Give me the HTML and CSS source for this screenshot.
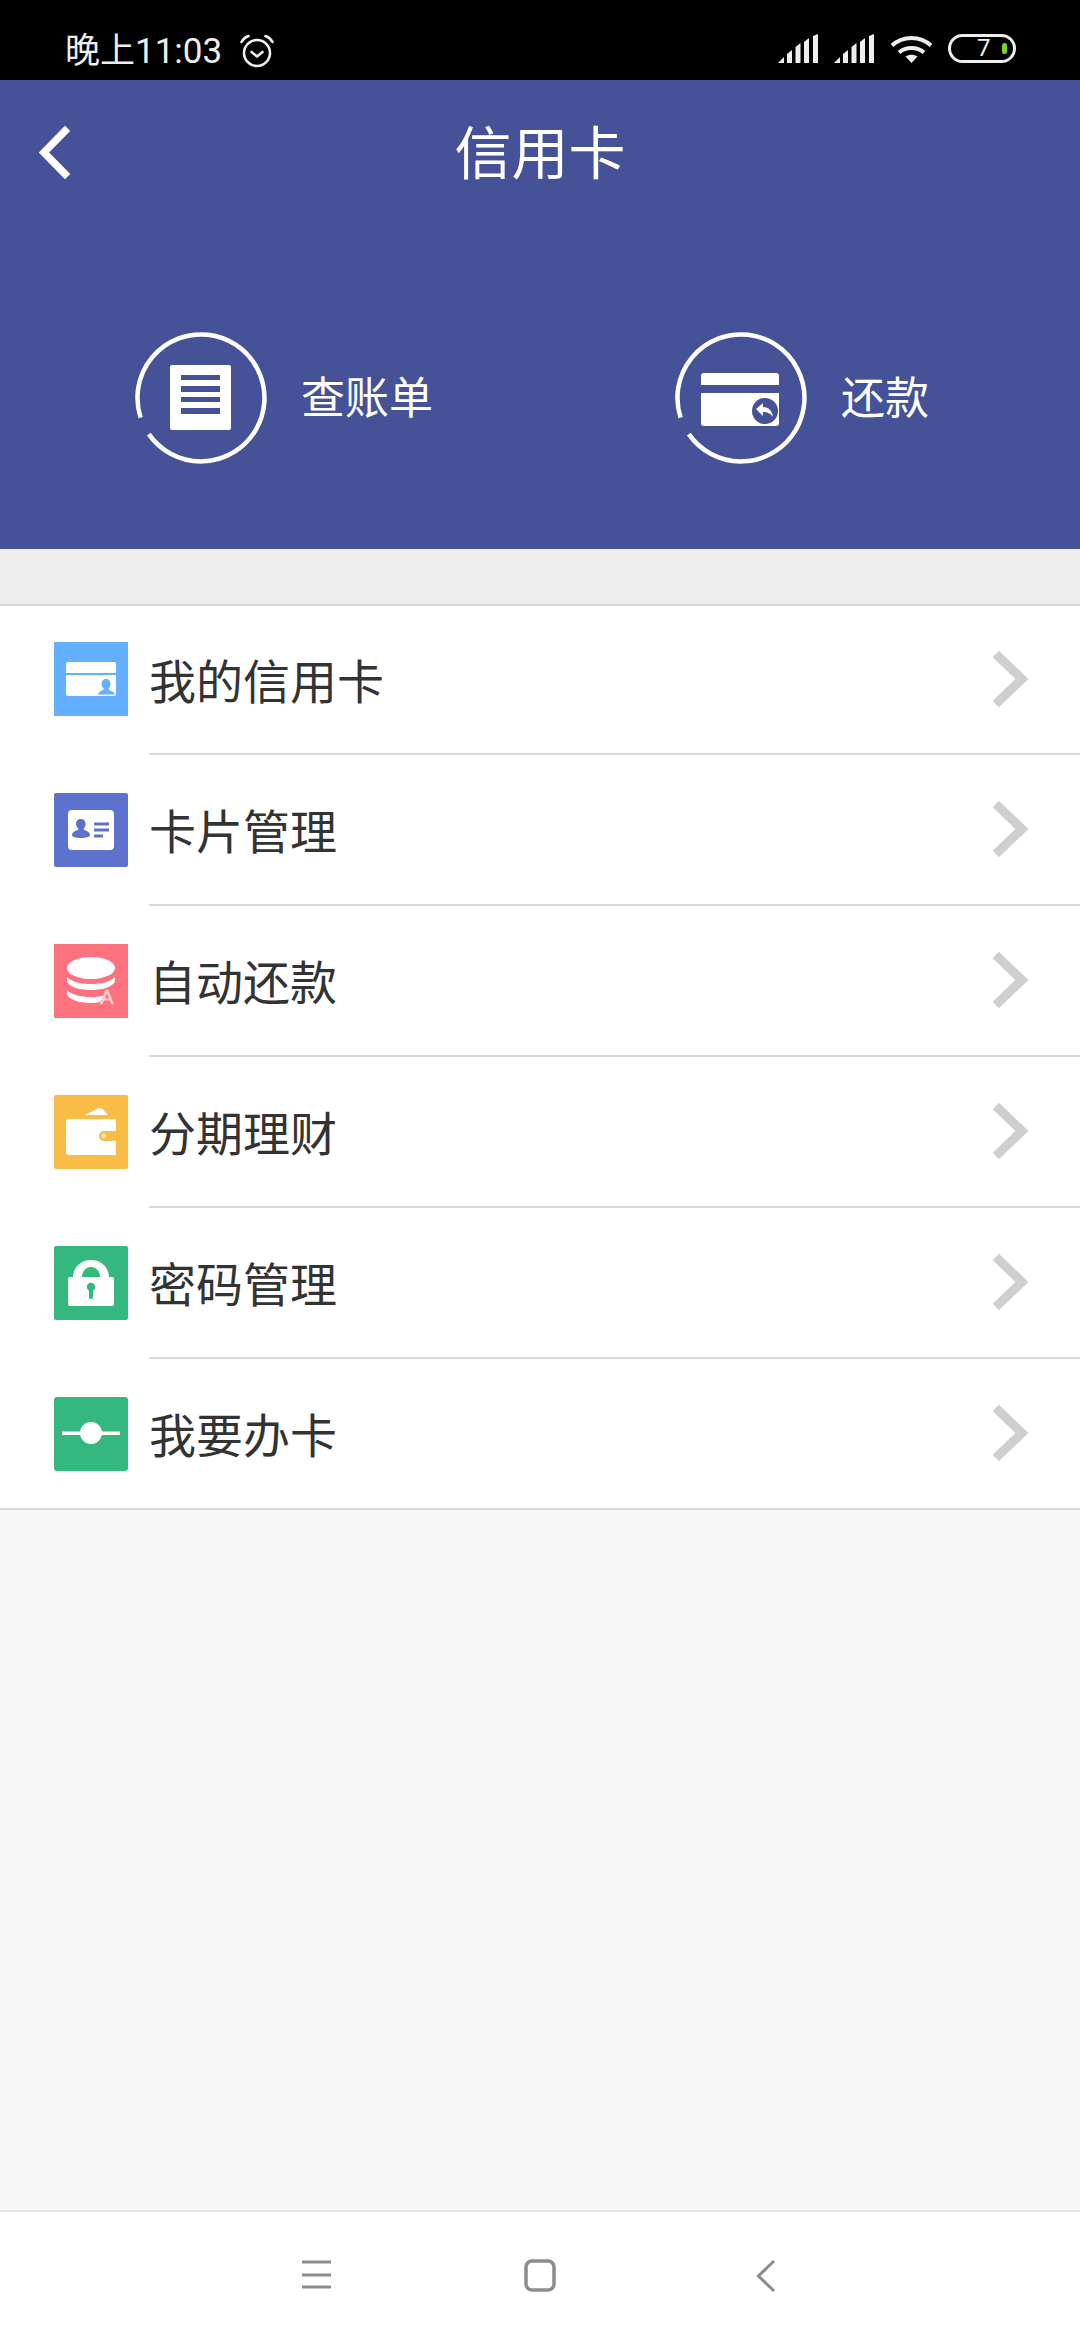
FILE: index.html
```html
<!DOCTYPE html>
<html lang="zh-CN">
<head>
<meta charset="utf-8">
<title>信用卡</title>
<link rel="stylesheet" href="styles.css">
</head>
<body>
<div class="page">
  <div class="statusbar">
    <div class="status-left">
      <span class="clock">晚上11:03</span>
      <svg class="alarm" viewBox="0 0 36 36" fill="none" stroke="#eee" stroke-width="2.6" stroke-linecap="round" stroke-linejoin="round"><circle cx="18" cy="20" r="13"/><path d="M12.5 19l5.500 4.500 5.500-4.500"/><path d="M2.500 9C4 6 6.500 4 9.500 3M33.500 9C32 6 29.500 4 26.500 3"/></svg>
    </div>
    <div class="status-right">
      <svg class="signal" viewBox="0 0 40 29" fill="#eee"><path d="M0 29L6 23V29Z"/><path d="M9 20l5-4V29H9Z"/><path d="M17.500 13l5-4V29h-5Z"/><path d="M26 8l5-4V29h-5Z"/><path d="M35 2l5-2V29h-5Z"/></svg>
      <svg class="signal" viewBox="0 0 40 29" fill="#eee"><path d="M0 29L6 23V29Z"/><path d="M9 20l5-4V29H9Z"/><path d="M17.500 13l5-4V29h-5Z"/><path d="M26 8l5-4V29h-5Z"/><path d="M35 2l5-2V29h-5Z"/></svg>
      <svg class="wifi" viewBox="0 0 43 29" fill="none" stroke="#eee" stroke-width="4"><path d="M2 11.500C13 1.500 30 1.500 41 11.500"/><path d="M9 18.500C16 12.500 27 12.500 34 18.500"/><path d="M21.500 29l-6-6.500c3.500-2.500 8.500-2.500 12 0Z" fill="#eee" stroke="none"/></svg>
      <div class="battery"><span class="battery-num">7</span><span class="battery-dot"></span></div>
    </div>
  </div>

  <header class="header">
    <div class="nav">
      <svg class="back" viewBox="0 0 36 56" fill="none" stroke="#fff" stroke-width="7.500" stroke-linecap="square"><path d="M29 6L8 27.500 29 49"/></svg>
      <h1 class="title">信用卡</h1>
    </div>
    <div class="actions">
      <div class="action">
        <svg class="ring" viewBox="0 0 132 132" fill="none"><path d="M13.800 102.100A63.500 63.500 0 1 0 5.600 85.600" stroke="#fff" stroke-width="4.500"/><rect x="35" y="33" width="61" height="65" rx="2" fill="#fff"/><g fill="#455297"><rect x="46" y="43" width="39" height="5"/><rect x="46" y="54" width="39" height="6"/><rect x="46" y="65" width="39" height="5"/><rect x="46" y="76" width="39" height="6"/></g></svg>
        <span class="action-label">查账单</span>
      </div>
      <div class="action">
        <svg class="ring" viewBox="0 0 132 132" fill="none"><path d="M13.800 102.100A63.500 63.500 0 1 0 5.600 85.600" stroke="#fff" stroke-width="4.500"/><path d="M26 44a3 3 0 0 1 3-3h72a3 3 0 0 1 3 3v9H26Z" fill="#fff"/><path d="M26 61h78v30a3 3 0 0 1-3 3H29a3 3 0 0 1-3-3Z" fill="#fff"/><circle cx="90" cy="79" r="13" fill="#455297"/><path d="M81 77l7-6v4c5 0 9 3 10 10-2-3-5-5-10-5v4Z" fill="#fff"/></svg>
        <span class="action-label">还款</span>
      </div>
    </div>
  </header>

  <main class="content">
    <div class="band"></div>
    <ul class="list">
      <li class="row">
        <svg class="tile" viewBox="0 0 74 74"><rect width="74" height="74" fill="#64b0ff"/><path d="M12 22a2 2 0 0 1 2-2h46a2 2 0 0 1 2 2v9H12Z" fill="#fff"/><path d="M12 33h50v19a2 2 0 0 1-2 2H14a2 2 0 0 1-2-2Z" fill="#fff"/><path d="M52 37c3 0 4.500 2 4.500 5 0 2-1 4-2 5 0 1.500 5.500 2 6.500 5.500H44c1-3.500 5.500-4 6-5.500-1-1-2.500-3-2.500-5 0-3 1.500-5 4.500-5Z" fill="#64b0ff"/></svg>
        <div class="row-body"><span class="row-label">我的信用卡</span><svg class="chev" viewBox="0 0 40 60" fill="none" stroke="#cfcfcf" stroke-width="9" stroke-linecap="square"><path d="M8 8l23 22L8 52"/></svg></div>
      </li>
      <li class="row">
        <svg class="tile" viewBox="0 0 74 74"><rect width="74" height="74" rx="2" fill="#5d72cf"/><rect x="14" y="17" width="46" height="40" rx="4" fill="#fff"/><path d="M27 26c3 0 4.500 2 4.500 5 0 2-1 4-2 5 0 1.500 6.500 2 6.500 6 0 2-4 3-9 3s-9-1-9-3c0-4 6.500-4.500 6.500-6-1-1-2.500-3-2.500-5 0-3 1.500-5 5-5Z" fill="#5d72cf"/><g fill="#5d72cf"><rect x="40" y="29.500" width="15" height="3"/><rect x="40" y="35.500" width="15" height="3"/><rect x="40" y="41.500" width="9" height="3"/></g></svg>
        <div class="row-body"><span class="row-label">卡片管理</span><svg class="chev" viewBox="0 0 40 60" fill="none" stroke="#cfcfcf" stroke-width="9" stroke-linecap="square"><path d="M8 8l23 22L8 52"/></svg></div>
      </li>
      <li class="row">
        <svg class="tile" viewBox="0 0 74 74"><rect width="74" height="74" fill="#fe7280"/><ellipse cx="37" cy="24" rx="24" ry="11" fill="#fff"/><path d="M13 33c5 5 14 7 24 7s19-2 24-7v3c0 6-11 10-24 10S13 42 13 36Z" fill="#fff"/><path d="M13 46c5 5 14 7 24 7 5 0 9-.5 13-1.500L46 58c-3 .5-6 1-9 1-13 0-24-4-24-10Z" fill="#fff"/><text class="tile-a" x="53" y="60" text-anchor="middle">A</text></svg>
        <div class="row-body"><span class="row-label">自动还款</span><svg class="chev" viewBox="0 0 40 60" fill="none" stroke="#cfcfcf" stroke-width="9" stroke-linecap="square"><path d="M8 8l23 22L8 52"/></svg></div>
      </li>
      <li class="row">
        <svg class="tile" viewBox="0 0 74 74"><rect width="74" height="74" rx="2" fill="#f8bc47"/><path d="M31 20l13-6.500c2-.8 3.500-.5 5 1L54 20Z" fill="#fff"/><path d="M12 27a3 3 0 0 1 3-3h47v36H15a3 3 0 0 1-3-3Z" fill="#fff"/><rect x="45" y="36" width="20" height="10" rx="5" fill="#f8bc47"/><rect x="62" y="34" width="3" height="14" fill="#f8bc47"/><circle cx="50" cy="41" r="2.500" fill="#ffe9a8"/></svg>
        <div class="row-body"><span class="row-label">分期理财</span><svg class="chev" viewBox="0 0 40 60" fill="none" stroke="#cfcfcf" stroke-width="9" stroke-linecap="square"><path d="M8 8l23 22L8 52"/></svg></div>
      </li>
      <li class="row">
        <svg class="tile" viewBox="0 0 74 74"><rect width="74" height="74" rx="2" fill="#34b87f"/><path d="M19 32C19 21 27 14 37 14s18 7 18 18Z" fill="#fff"/><path d="M28 31c0-6 4-10 9-10s9 4 9 10Z" fill="#34b87f"/><rect x="14" y="31" width="46" height="29" rx="2" fill="#fff"/><circle cx="37" cy="41" r="4.200" fill="#34b87f"/><rect x="35" y="42" width="4" height="11" rx="2" fill="#34b87f"/></svg>
        <div class="row-body"><span class="row-label">密码管理</span><svg class="chev" viewBox="0 0 40 60" fill="none" stroke="#cfcfcf" stroke-width="9" stroke-linecap="square"><path d="M8 8l23 22L8 52"/></svg></div>
      </li>
      <li class="row">
        <svg class="tile" viewBox="0 0 74 74"><rect width="74" height="74" rx="3" fill="#34b87f"/><rect x="8" y="34.500" width="58" height="3.500" fill="#fff"/><circle cx="37" cy="36" r="11" fill="#fff"/></svg>
        <div class="row-body"><span class="row-label">我要办卡</span><svg class="chev" viewBox="0 0 40 60" fill="none" stroke="#cfcfcf" stroke-width="9" stroke-linecap="square"><path d="M8 8l23 22L8 52"/></svg></div>
      </li>
    </ul>
  </main>

  <nav class="navbar">
    <svg class="nav-icon" viewBox="0 0 34 34" fill="none" stroke="#8c8c8c" stroke-width="3"><path d="M2 3h29M2 16h29M2 28h29"/></svg>
    <svg class="nav-icon" viewBox="0 0 34 34" fill="none" stroke="#8c8c8c" stroke-width="3.500"><rect x="2" y="2" width="28" height="29" rx="6"/></svg>
    <svg class="nav-icon nav-icon-back" viewBox="0 0 34 34" fill="none" stroke="#8c8c8c" stroke-width="3"><path d="M22 2L6.500 17 22 32"/></svg>
  </nav>
</div>
</body>
</html>
```

FILE: styles.css
```css
* { box-sizing: border-box; }
html, body { margin: 0; padding: 0; }
body { font-family: "Noto Sans CJK SC", "Noto Sans", sans-serif; }

.page { width: 1080px; height: 2340px; display: flex; flex-direction: column; background: #f7f7f7; overflow: hidden; }

.statusbar { height: 80px; background: #000; display: flex; justify-content: space-between; align-items: flex-start; padding: 34px 64px 0 65px; flex: none; }
.status-left { display: flex; align-items: center; height: 36px; }
.clock { font-family: Roboto, "Noto Sans CJK SC", sans-serif; font-size: 35px; line-height: 36px; color: #eee; }
.alarm { width: 36px; height: 36px; margin: 0 0 3px 17px; }
.status-right { display: flex; align-items: center; height: 29px; }
.signal { width: 40px; height: 29px; margin-right: 16px; }
.wifi { width: 43px; height: 29px; margin-right: 15px; }
.battery { width: 68px; height: 29px; border: 3px solid #eee; border-radius: 15px; display: flex; align-items: center; position: relative; padding-left: 26px; }
.battery-num { font-family: Roboto, sans-serif; font-size: 24px; line-height: 23px; color: #eee; }
.battery-dot { position: absolute; right: 6px; top: 6px; width: 5px; height: 11px; border-radius: 3px; background: #7ed321; }

.header { background: #455297; height: 469px; flex: none; display: flex; flex-direction: column; }
.nav { height: 144px; position: relative; display: flex; align-items: center; justify-content: center; padding-bottom: 6px; }
.back { position: absolute; left: 36px; top: 45px; width: 36px; height: 56px; }
.title { margin: 0; font-size: 57px; line-height: 80px; font-weight: 400; color: #fff; }
.actions { display: grid; grid-template-columns: 540px 540px; margin-top: 108px; }
.action { display: flex; align-items: center; padding-left: 135px; }
.ring { width: 132px; height: 132px; flex: none; }
.action-label { margin: 0 0 6px 34px; font-size: 44px; line-height: 60px; color: #fff; }

.content { flex: 1; display: flex; flex-direction: column; }
.band { height: 55px; background: #eee; flex: none; }
.list { list-style: none; margin: 0; padding: 0; background: #fff; border-top: 2px solid #d8d8d8; border-bottom: 2px solid #d8d8d8; }
.row { display: flex; align-items: center; height: 151px; padding: 0 0 2px 54px; }
.row:first-child { height: 149px; }
.row:first-child .tile { margin-bottom: 1px; }
.row:last-child { height: 149px; padding-bottom: 0; }
.tile { width: 74px; height: 74px; flex: none; }
.tile-a { font-family: "Liberation Sans", sans-serif; font-size: 20px; fill: #ffd3d7; stroke: #ffd3d7; stroke-width: 0.4px; }
.row-body { flex: 1; align-self: stretch; margin: 0 0 -2px 21px; display: flex; align-items: center; justify-content: space-between; padding-right: 49px; border-bottom: 2px solid #d8d8d8; }
.row:last-child .row-body { border-bottom: 0; margin-bottom: 0; }
.row-label { font-size: 47px; line-height: 60px; color: #333; margin-bottom: 2px; }
.chev { width: 40px; height: 60px; flex: none; margin-bottom: 2px; }

.navbar { height: 130px; flex: none; background: #fff; border-top: 2px solid #e6e6e6; display: flex; gap: 190px; align-items: center; padding: 0 0 0 300px; }
.nav-icon { width: 34px; height: 34px; flex: none; }
.nav-icon-back { margin-left: 4px; }
```
